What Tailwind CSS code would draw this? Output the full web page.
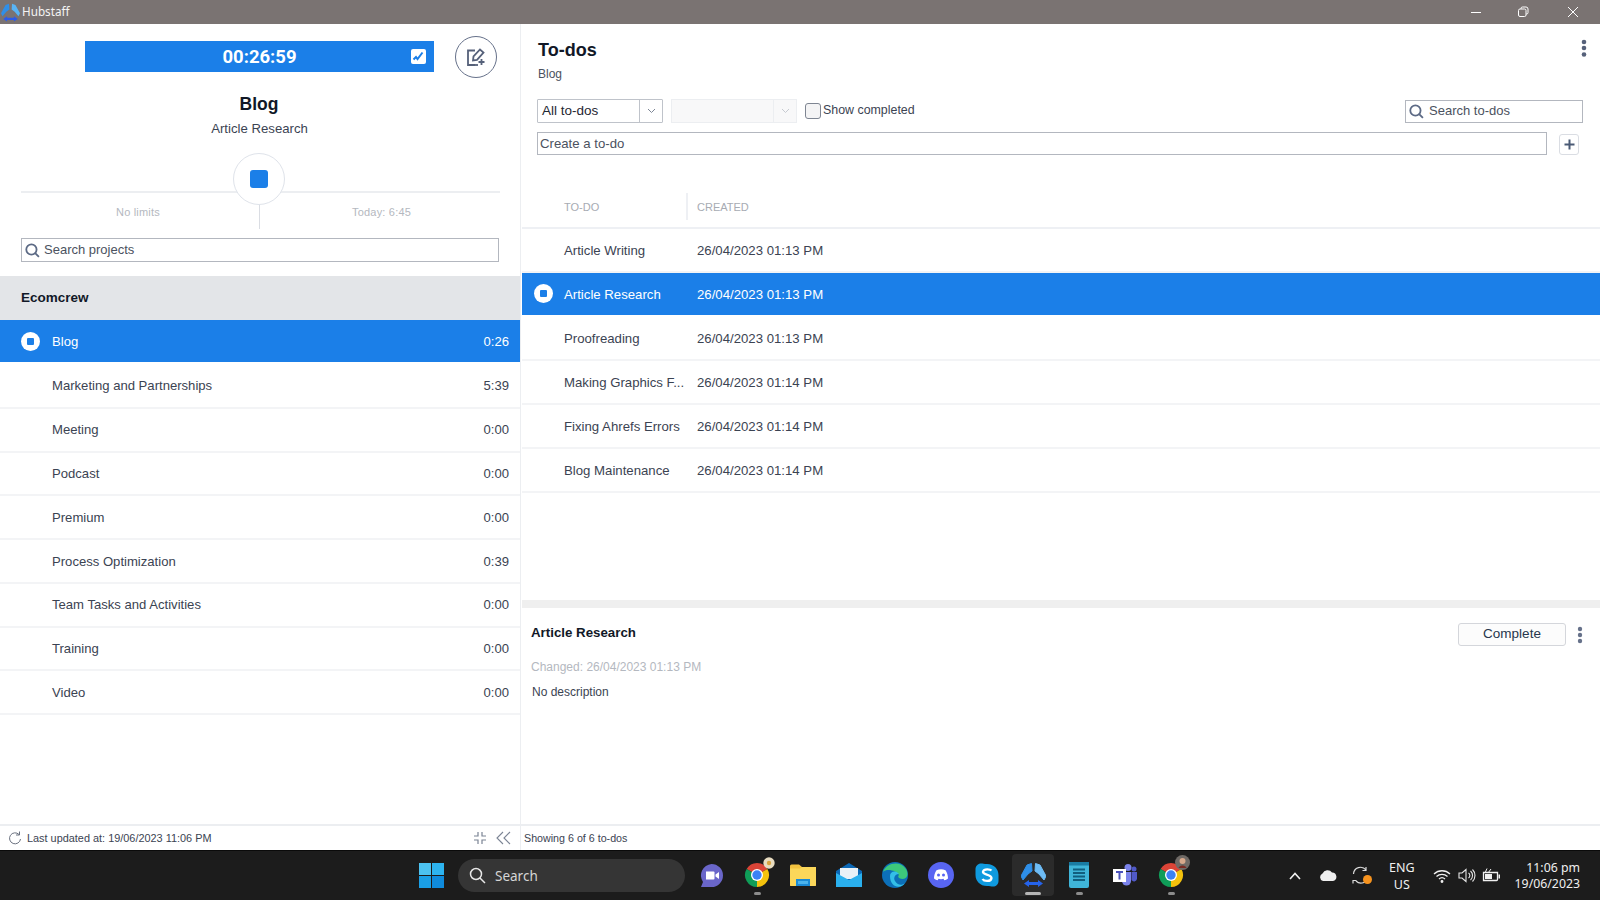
<!doctype html>
<html>
<head>
<meta charset="utf-8">
<title>Hubstaff</title>
<script src="https://cdn.jsdelivr.net/npm/@tailwindcss/browser@4"></script>
</head>
<body class="w-[1600px] h-[900px] overflow-hidden bg-white font-['Liberation_Sans',sans-serif] text-[13.2px] text-[#3b4352]">
<div class="flex flex-col h-[900px]">

  <!-- title bar -->
  <div class="h-6 bg-[#7a7372] flex items-center text-white shrink-0">
    <svg class="ml-[1px] w-[19px] h-[19px]" viewBox="0 0 25 24"><path d="M10.500 0.500L6 2L0 13L2 17L7 11L11 8Z" fill="#2f8fe8"/><path d="M14.500 0.500L19 2L25 13L23 17L18 11L14 8Z" fill="#58b4f5"/><path d="M3 20.500L8 17V19H17V17L22 20.500L17 24V22H8V24Z" fill="#2c5be8"/></svg>
    <span class="ml-[2px] font-['Noto_Sans',sans-serif] text-[11.700px] text-[#f4f4f4]">Hubstaff</span>
    <div class="ml-auto flex items-center">
      <svg class="w-[12px] h-[12px] mr-[35px]" viewBox="0 0 12 12"><path d="M1 6.500H11" stroke="#fff" stroke-width="1"/></svg>
      <svg class="w-[12px] h-[12px] mr-[38px]" viewBox="0 0 12 12" fill="none" stroke="#fff"><rect x="1.500" y="3" width="7.500" height="7.500" rx="1.500"/><path d="M4 3V2.500A1.500 1.500 0 0 1 5.500 1H9A2 2 0 0 1 11 3V6.500A1.500 1.500 0 0 1 9.500 8H9"/></svg>
      <svg class="w-[12px] h-[12px] mr-[21px]" viewBox="0 0 12 12"><path d="M1 1L11 11M11 1L1 11" stroke="#fff" stroke-width="1"/></svg>
    </div>
  </div>

  <!-- app -->
  <div class="flex-1 flex min-h-0">
    <!-- left panel -->
    <div class="w-[521px] shrink-0 border-r border-[#eceef1] flex flex-col text-[13.100px]">
      <div class="flex items-center h-[66px] pl-[85px]">
        <div class="w-[349px] h-[31px] -mt-[1px] pt-[3px] bg-[#1b7fe8] relative flex items-center justify-center text-white font-['Roboto',sans-serif] font-bold text-[18.5px]">
          00:26:59
          <svg class="absolute right-[8px] top-[8px] w-[15px] h-[15px]" viewBox="0 0 15 15"><rect width="15" height="15" rx="2" fill="#fff"/><path d="M2.500 10.500L5 8L6.500 10L11.500 3.500" fill="none" stroke="#1b7fe8" stroke-width="2"/></svg>
        </div>
        <div class="ml-[21px] w-[42px] h-[42px] rounded-full border border-[#66718a] flex items-center justify-center">
          <svg class="w-[20px] h-[20px]" viewBox="0 0 20 20" fill="none" stroke="#56617a" stroke-width="1.800"><path d="M9 3.500H2V18H9"/><path d="M2 18H12"/><path d="M7 13.500L7.500 9.500L14 2.500L17.500 5.500L11 12.800Z"/><path d="M15.500 12V18M12.500 15H18.500"/></svg>
        </div>
      </div>
      <div class="text-center text-[17.5px] font-bold text-[#111827] leading-[20px] mt-[4px] pr-[2px]">Blog</div>
      <div class="text-center text-[13.2px] leading-[16px] mt-[7px] text-[#3b4352] pr-[1px]">Article Research</div>

      <!-- slider -->
      <div class="relative h-[86px] mt-[15px] mx-[21px] w-[479px]">
        <div class="absolute left-0 right-0 top-[39px] h-[2px] bg-[#eceef1]"></div>
        <div class="absolute left-[212px] top-[1px] w-[52px] h-[52px] rounded-full bg-white border-[1.500px] border-[#dfe3ea] flex items-center justify-center">
          <div class="w-[18px] h-[18px] rounded-[3px] bg-[#1b7fe8]"></div>
        </div>
        <div class="absolute left-[238px] top-[53px] w-[1px] h-[24px] bg-[#dadde3]"></div>
        <div class="absolute left-[95px] top-[53px] text-[11px] leading-[15px] tracking-[0.2px] text-[#b4b8c0]">No limits</div>
        <div class="absolute left-[331px] top-[53px] text-[11px] leading-[15px] tracking-[0.2px] text-[#b4b8c0]">Today: 6:45</div>
      </div>

      <div class="mx-[21px] w-[478px] h-[24px] border border-[#b3b7bf] flex items-center pl-[3px] shrink-0">
        <svg class="w-[15px] h-[15px]" viewBox="0 0 14 14" fill="none" stroke="#5c6a85" stroke-width="1.700"><circle cx="6" cy="6" r="4.800"/><path d="M9.500 9.500L13 13"/></svg>
        <span class="ml-[4px] text-[13px] text-[#4b5260]">Search projects</span>
      </div>

      <div class="mt-[14px] h-[44px] bg-[#e3e5e8] flex items-center pl-[21px] font-bold text-[13.5px] text-[#111827] shrink-0">Ecomcrew</div>

      <div class="h-[42px] pt-[1px] bg-[#1b7fe8] text-white flex items-center pl-[21px] pr-[11px] shrink-0 mb-[2px]">
        <div class="-mt-[1px] w-[19px] h-[19px] rounded-full bg-white flex items-center justify-center"><div class="w-[7px] h-[7px] rounded-[1px] bg-[#1b7fe8]"></div></div>
        <span class="ml-[12px]">Blog</span><span class="ml-auto">0:26</span>
      </div>
      <div class="h-[44.750px] pt-[1px] border-b-2 border-[#f3f4f6] flex items-center pl-[52px] pr-[11px] shrink-0"><span>Marketing and Partnerships</span><span class="ml-auto">5:39</span></div>
      <div class="h-[43.750px] pt-[1px] border-b-2 border-[#f3f4f6] flex items-center pl-[52px] pr-[11px] shrink-0"><span>Meeting</span><span class="ml-auto">0:00</span></div>
      <div class="h-[43.750px] pt-[1px] border-b-2 border-[#f3f4f6] flex items-center pl-[52px] pr-[11px] shrink-0"><span>Podcast</span><span class="ml-auto">0:00</span></div>
      <div class="h-[43.750px] pt-[1px] border-b-2 border-[#f3f4f6] flex items-center pl-[52px] pr-[11px] shrink-0"><span>Premium</span><span class="ml-auto">0:00</span></div>
      <div class="h-[43.750px] pt-[1px] border-b-2 border-[#f3f4f6] flex items-center pl-[52px] pr-[11px] shrink-0"><span>Process Optimization</span><span class="ml-auto">0:39</span></div>
      <div class="h-[43.750px] pt-[1px] border-b-2 border-[#f3f4f6] flex items-center pl-[52px] pr-[11px] shrink-0"><span>Team Tasks and Activities</span><span class="ml-auto">0:00</span></div>
      <div class="h-[43.750px] pt-[1px] border-b-2 border-[#f3f4f6] flex items-center pl-[52px] pr-[11px] shrink-0"><span>Training</span><span class="ml-auto">0:00</span></div>
      <div class="h-[43.750px] pt-[1px] border-b-2 border-[#f3f4f6] flex items-center pl-[52px] pr-[11px] shrink-0"><span>Video</span><span class="ml-auto">0:00</span></div>

      <div class="mt-auto h-[26px] border-t-2 border-[#eceef1] flex items-center pl-[8px] pr-[9px] text-[10.900px] text-[#3b4352] shrink-0">
        <svg class="w-[14px] h-[14px]" viewBox="0 0 14 14" fill="none" stroke="#6b7280" stroke-width="1"><path d="M11 3.500A5.500 5.500 0 1 0 12.500 8"/><path d="M11.500 0.500V4H8"/></svg>
        <span class="ml-[5px] pt-[1px]">Last updated at: 19/06/2023 11:06 PM</span>
        <svg class="ml-auto w-[14px] h-[14px]" viewBox="0 0 14 14" fill="none" stroke="#7b8494" stroke-width="1.200"><path d="M5 1V5H1M9 1V5H13M5 13V9H1M9 13V9H13"/></svg>
        <svg class="ml-[9px] w-[15px] h-[14px]" viewBox="0 0 15 14" fill="none" stroke="#7b8494" stroke-width="1.100"><path d="M7 1L1 7L7 13M14 1L8 7L14 13"/></svg>
      </div>
    </div>

    <!-- right panel -->
    <div class="flex-1 flex flex-col min-w-0">
      <div class="relative h-[75px] pl-[17px] pt-[15px] shrink-0">
        <div class="text-[18px] font-bold leading-[22px] text-[#111827]">To-dos</div>
        <div class="text-[12px] leading-[14px] mt-[6px] text-[#4b5260]">Blog</div>
        <svg class="absolute right-[13px] top-[15px] w-[6px] h-[18px]" viewBox="0 0 6 18" fill="#56617a"><circle cx="3" cy="3" r="2.300"/><circle cx="3" cy="9" r="2.300"/><circle cx="3" cy="15.500" r="2.300"/></svg>
      </div>

      <div class="flex items-center h-[24px] pl-[16px] pr-[17px] shrink-0">
        <div class="w-[126px] h-[24px] border border-[#bfc3ca] rounded-[1px] flex items-center shrink-0">
          <span class="pl-[4px] flex-1 text-[13.500px] text-[#1f2733]">All to-dos</span>
          <span class="w-[23px] h-full border-l border-[#bfc3ca] flex items-center justify-center"><svg class="w-[9px] h-[6px]" viewBox="0 0 9 6" fill="none" stroke="#7d8696"><path d="M1 1L4.500 4.500L8 1"/></svg></span>
        </div>
        <div class="ml-[8px] w-[126px] h-[24px] border border-[#eceef1] bg-[#f8f8f9] flex items-center justify-end shrink-0">
          <span class="w-[23px] h-full border-l border-[#eceef1] flex items-center justify-center"><svg class="w-[9px] h-[6px]" viewBox="0 0 9 6" fill="none" stroke="#c6cad1"><path d="M1 1L4.500 4.500L8 1"/></svg></span>
        </div>
        <div class="ml-[8px] w-[16px] h-[16px] border border-[#7e8592] rounded-[3px] bg-[#f4f4f5] shrink-0"></div>
        <span class="ml-[2px] text-[12.400px] text-[#3b4352] -mt-[2px]">Show completed</span>
        <div class="ml-auto w-[178px] h-[23px] border border-[#b3b7bf] flex items-center pl-[3px] shrink-0">
          <svg class="w-[15px] h-[15px]" viewBox="0 0 14 14" fill="none" stroke="#5c6a85" stroke-width="1.700"><circle cx="6" cy="6" r="4.800"/><path d="M9.500 9.500L13 13"/></svg>
          <span class="ml-[5px] text-[13px] text-[#4b5260]">Search to-dos</span>
        </div>
      </div>

      <div class="flex items-center mt-[9px] pl-[16px] pr-[21px] shrink-0">
        <div class="flex-1 h-[23px] border border-[#b3b7bf] flex items-center pl-[2px] pt-[1px] text-[13.200px] text-[#4b5260]">Create a to-do</div>
        <div class="ml-[12px] mt-[1px] w-[20px] h-[21px] border border-[#dadde3] rounded-[3px] flex items-center justify-center">
          <svg class="w-[11px] h-[11px]" viewBox="0 0 11 11"><path d="M5.500 0.500V10.500M0.500 5.500H10.500" stroke="#4a5a75" stroke-width="2"/></svg>
        </div>
      </div>

      <div class="mt-[38px] ml-[1px] h-[36px] border-b-2 border-[#eef0f4] flex items-center text-[11px] text-[#a7abb3] shrink-0">
        <span class="pl-[42px] w-[166px] border-r-2 border-[#eef0f4] h-[27px] flex items-center -mt-[7px] pt-[2px]">TO-DO</span>
        <span class="pl-[9px] -mt-[5px]">CREATED</span>
      </div>

      <div class="ml-[1px] h-[43.750px] pt-[2px] border-b-2 border-[#f3f4f6] flex items-center shrink-0"><span class="pl-[42px] w-[174px]">Article Writing</span><span class="pl-[1px]">26/04/2023 01:13 PM</span></div>
      <div class="ml-[1px] h-[42.500px] pt-[2px] mb-[1.250px] bg-[#1b7fe8] text-white flex items-center shrink-0 relative">
        <div class="absolute left-[12px] top-[11.500px] w-[19px] h-[19px] rounded-full bg-white flex items-center justify-center"><div class="w-[7px] h-[7px] rounded-[1px] bg-[#1b7fe8]"></div></div>
        <span class="pl-[42px] w-[174px]">Article Research</span><span class="pl-[1px]">26/04/2023 01:13 PM</span></div>
      <div class="ml-[1px] h-[44px] pt-[2px] border-b-2 border-[#f3f4f6] flex items-center shrink-0"><span class="pl-[42px] w-[174px]">Proofreading</span><span class="pl-[1px]">26/04/2023 01:13 PM</span></div>
      <div class="ml-[1px] h-[44px] pt-[2px] border-b-2 border-[#f3f4f6] flex items-center shrink-0"><span class="pl-[42px] w-[174px]">Making Graphics F...</span><span class="pl-[1px]">26/04/2023 01:14 PM</span></div>
      <div class="ml-[1px] h-[44px] pt-[2px] border-b-2 border-[#f3f4f6] flex items-center shrink-0"><span class="pl-[42px] w-[174px]">Fixing Ahrefs Errors</span><span class="pl-[1px]">26/04/2023 01:14 PM</span></div>
      <div class="ml-[1px] h-[44px] pt-[2px] border-b-2 border-[#f3f4f6] flex items-center shrink-0"><span class="pl-[42px] w-[174px]">Blog Maintenance</span><span class="pl-[1px]">26/04/2023 01:14 PM</span></div>

      <div class="mt-auto ml-[1px] h-[8px] bg-[#efefef] shrink-0"></div>
      <div class="h-[216px] shrink-0 relative pl-[10px] pt-[17px]">
        <div class="font-bold text-[13.300px] leading-[16px] text-[#111827]">Article Research</div>
        <div class="text-[12px] leading-[14px] mt-[19px] text-[#b4b8c0]">Changed: 26/04/2023 01:13 PM</div>
        <div class="text-[12px] leading-[14px] mt-[11px] text-[#3b4352] pl-[1px]">No description</div>
        <div class="absolute left-[937px] top-[15px] w-[108px] h-[23px] border border-[#d4d6db] rounded-[3px] bg-[#fcfcfc] flex items-center justify-center text-[13.500px] text-[#27364d]">Complete</div>
        <svg class="absolute left-[1056px] top-[18px] w-[6px] h-[18px]" viewBox="0 0 6 18" fill="#66718a"><circle cx="3" cy="3" r="2.200"/><circle cx="3" cy="9" r="2.200"/><circle cx="3" cy="15" r="2.200"/></svg>
      </div>
      <div class="h-[26px] border-t-2 border-[#eceef1] flex items-center pl-[3px] text-[10.700px] text-[#3b4352] shrink-0">Showing 6 of 6 to-dos</div>
    </div>
  </div>

  <!-- taskbar -->
  <div class="h-[50px] bg-[#1c1c1c] border-t border-[#0a0a0a] flex items-center shrink-0 relative font-['Noto_Sans',sans-serif] text-white">
    <svg class="ml-[419px] w-[25px] h-[25px] shrink-0" viewBox="0 0 25 25"><rect width="12" height="12" fill="#4cc2f1"/><rect x="13" width="12" height="12" fill="#2db4f0"/><rect y="13" width="12" height="12" fill="#1a9fe6"/><rect x="13" y="13" width="12" height="12" fill="#0f8bdc"/></svg>
    <div class="ml-[14px] w-[227px] h-[33px] rounded-full bg-[#353535] flex items-center pl-[11px] shrink-0">
      <svg class="w-[17px] h-[17px]" viewBox="0 0 17 17" fill="none" stroke="#e8e8e8" stroke-width="1.500"><circle cx="7" cy="7" r="5.500"/><path d="M11 11L16 16"/></svg>
      <span class="ml-[9px] pt-[1px] text-[13.500px] text-[#d6d6d6]">Search</span>
    </div>

    <div class="ml-[3px] flex items-center -mt-[1px]">
      <!-- meeting -->
      <div class="w-[46px] h-[42px] flex items-center justify-center"><svg class="w-[25px] h-[25px]" viewBox="0 0 25 25"><path d="M12.500 1A11.500 11.500 0 1 1 12.500 24H2L4 19A11.500 11.500 0 0 1 12.500 1Z" fill="#6a66c9"/><path d="M7 8.500H14.500A1 1 0 0 1 15.500 9.500V15.500A1 1 0 0 1 14.500 16.500H7Z" fill="#fff"/><path d="M16.500 11.500L20 9V16L16.500 13.500Z" fill="#fff"/></svg></div>
      <!-- chrome -->
      <div class="w-[46px] h-[42px] flex items-center justify-center relative"><svg class="w-[26px] h-[26px]" viewBox="0 0 26 26"><path d="M13 13L2.600 7A12 12 0 0 1 23.400 7Z" fill="#db4437"/><path d="M13 13L23.400 7A12 12 0 0 1 13 25Z" fill="#f4c20d"/><path d="M13 13L13 25A12 12 0 0 1 2.600 7Z" fill="#0f9d58"/><circle cx="13" cy="13" r="6" fill="#fff"/><circle cx="13" cy="13" r="4.700" fill="#3b82f6"/></svg><svg class="absolute right-[5px] top-[3px] w-[12px] h-[12px]" viewBox="0 0 11 11"><circle cx="5.500" cy="5.500" r="5.200" fill="#e8dcc0"/><circle cx="5.500" cy="5.500" r="2" fill="#d9a441"/></svg><div class="absolute bottom-[1px] left-[20px] w-[7px] h-[3px] rounded-full bg-[#8c8c8c]"></div></div>
      <!-- folder -->
      <div class="w-[46px] h-[42px] flex items-center justify-center"><svg class="w-[26px] h-[24px]" viewBox="0 0 26 24"><path d="M0 3A1.500 1.500 0 0 1 1.500 1.500H9L12 4H24.500A1.500 1.500 0 0 1 26 5.500V22A1 1 0 0 1 25 23H1A1 1 0 0 1 0 22Z" fill="#f3c33f"/><path d="M0 5.500H10L12 4H26V22A1 1 0 0 1 25 23H1A1 1 0 0 1 0 22Z" fill="#fbd75a"/><rect x="6" y="16" width="14" height="7" fill="#1a8ad4"/><rect x="8" y="18" width="10" height="3" fill="#4bb3ec"/></svg></div>
      <!-- mail -->
      <div class="w-[46px] h-[42px] flex items-center justify-center"><svg class="w-[26px] h-[25px]" viewBox="0 0 26 25"><path d="M0 8L13 0L26 8V24H0Z" fill="#0b67b5"/><path d="M4 5H22V16H4Z" fill="#e9f1f7"/><path d="M0 10L13 17L26 10V24H0Z" fill="#2ab0ee"/></svg></div>
      <!-- edge -->
      <div class="w-[46px] h-[42px] flex items-center justify-center"><svg class="w-[26px] h-[26px]" viewBox="0 0 26 26"><circle cx="13" cy="13" r="13" fill="#0c6fb8"/><path d="M1 10C4 1 18 -2 24 7C27 12 25 17 21 17C17 17 15 15 17 13C15 9 5 6 1 10Z" fill="#3dc87b"/><path d="M8 14C8 9 14 8 17 12C13 12 11 16 13 19C15 23 20 24 23 21C18 28 8 25 8 14Z" fill="#33bfe8"/></svg></div>
      <!-- discord -->
      <div class="w-[46px] h-[42px] flex items-center justify-center"><svg class="w-[26px] h-[26px]" viewBox="0 0 26 26"><circle cx="13" cy="13" r="13" fill="#5865f2"/><path d="M8.500 8.200C11.500 7 14.500 7 17.500 8.200C19 10.500 20 13.300 20 16.500C18.800 17.500 17.500 18 16.300 18.300L15.500 16.800C14 17.300 12 17.300 10.500 16.800L9.700 18.300C8.500 18 7.200 17.500 6 16.500C6 13.300 7 10.500 8.500 8.200Z" fill="#fff"/><circle cx="10.500" cy="13" r="1.500" fill="#5865f2"/><circle cx="15.500" cy="13" r="1.500" fill="#5865f2"/></svg></div>
      <!-- skype -->
      <div class="w-[46px] h-[42px] flex items-center justify-center"><svg class="w-[24px] h-[24px]" viewBox="0 0 24 24"><path d="M6 0.500C8 0.500 9 1 12 1C19 1 23.500 6 23.500 12C23.500 14 23.500 15 23.500 18C23.500 21.500 21 23.500 18 23.500C16 23.500 15 23 12 23C5 23 0.500 18 0.500 12C0.500 10 0.500 9 0.500 6C0.500 3 3 0.500 6 0.500Z" fill="#0f9adf"/><path d="M16.500 7.500C15 6 9 5.500 8 8.500C7 12 16.500 11 16.500 15C16 19 9 18.500 7.500 16" fill="none" stroke="#fff" stroke-width="2.300"/></svg></div>
      <!-- hubstaff -->
      <div class="w-[46px] h-[42px] flex items-center justify-center relative"><div class="absolute left-[2px] top-0 w-[42px] h-[42px] rounded-[4px] bg-[#2b2b2b]"></div><svg class="relative w-[25px] h-[24px]" viewBox="0 0 25 24"><path d="M10.500 0.500L6 2L0 13L2 17L7 11L11 8Z" fill="#2e8fe9" stroke="#2e8fe9" stroke-linejoin="round"/><path d="M14.500 0.500L19 2L25 13L23 17L18 11L14 8Z" fill="#6dbcf6" stroke="#6dbcf6" stroke-linejoin="round"/><path d="M3 20.500L8 17V19H17V17L22 20.500L17 24V22H8V24Z" fill="#2563eb"/></svg><div class="absolute bottom-[1px] left-[15px] w-[16px] h-[3px] rounded-full bg-[#b5b5b5]"></div></div>
      <!-- notepad -->
      <div class="w-[46px] h-[42px] flex items-center justify-center relative"><svg class="w-[20px] h-[26px]" viewBox="0 0 20 26"><rect y="1" width="20" height="25" rx="2" fill="#3fb5d9"/><rect x="0" y="0" width="20" height="3.500" fill="#1a7ca3"/><path d="M4 7.500H16M4 11H16M4 14.500H16M4 18H16" stroke="#115e7e" stroke-width="2"/></svg><div class="absolute bottom-[1px] left-[20px] w-[7px] h-[3px] rounded-full bg-[#8c8c8c]"></div></div>
      <!-- teams -->
      <div class="w-[46px] h-[42px] flex items-center justify-center"><svg class="w-[24px] h-[22px]" viewBox="0 0 24 22"><circle cx="15" cy="3.500" r="3.500" fill="#7b83eb"/><circle cx="21" cy="5" r="2.500" fill="#5059c9"/><path d="M9 8H18V17A4.500 4.500 0 0 1 9 17Z" fill="#7b83eb"/><path d="M18.500 8H24V15A3 3 0 0 1 18.500 16Z" fill="#5059c9"/><rect x="0" y="5" width="13" height="13" fill="#fff"/><path d="M3 8H10M6.500 8V15.500" stroke="#4b53bc" stroke-width="2"/></svg></div>
      <!-- chrome 2 -->
      <div class="w-[46px] h-[42px] flex items-center justify-center relative"><svg class="w-[26px] h-[26px]" viewBox="0 0 26 26"><path d="M13 13L2.600 7A12 12 0 0 1 23.400 7Z" fill="#db4437"/><path d="M13 13L23.400 7A12 12 0 0 1 13 25Z" fill="#f4c20d"/><path d="M13 13L13 25A12 12 0 0 1 2.600 7Z" fill="#0f9d58"/><circle cx="13" cy="13" r="6" fill="#fff"/><circle cx="13" cy="13" r="4.700" fill="#3b82f6"/></svg><svg class="absolute right-[4px] top-[1px] w-[15px] h-[15px]" viewBox="0 0 15 15"><circle cx="7.500" cy="7.500" r="7.500" fill="#6f6a66"/><circle cx="7.500" cy="6" r="3" fill="#d8a98c"/><path d="M3.500 13C4.500 9.500 10.500 9.500 11.500 13Z" fill="#7a2a22"/></svg><div class="absolute bottom-[1px] left-[20px] w-[7px] h-[3px] rounded-full bg-[#8c8c8c]"></div></div>
    </div>

    <!-- tray -->
    <div class="ml-auto flex items-center pr-[20px]">
      <svg class="w-[12px] h-[8px]" viewBox="0 0 12 8" fill="none" stroke="#f2f2f2" stroke-width="1.600"><path d="M1 7L6 1.500L11 7"/></svg>
      <svg class="ml-[18px] w-[18px] h-[11px]" viewBox="0 0 18 11"><path d="M4 11A4 4 0 0 1 3.500 3.500A5.500 5.500 0 0 1 13 2.500A4.300 4.300 0 0 1 14 11Z" fill="#efefef"/></svg>
      <div class="ml-[15px] relative w-[20px] h-[20px]"><svg class="w-[18px] h-[19px]" viewBox="0 0 18 19" fill="none" stroke="#dcdcdc" stroke-width="1.200"><path d="M1.500 8A7 7 0 0 1 14 4M14 1V4.500H10.500"/><path d="M16 11A7 7 0 0 1 4 15M1 17.500V14.500H4.500"/></svg><div class="absolute right-[0px] bottom-[2px] w-[9px] h-[9px] rounded-full bg-[#f7931e]"></div></div>
      <div class="ml-[17px] text-center text-[12.500px] leading-[17px] text-[#f0f0f0]">ENG<br>US</div>
      <svg class="ml-[18px] w-[18px] h-[14px]" viewBox="0 0 18 14" fill="none" stroke="#f0f0f0" stroke-width="1.300"><path d="M1 5A11.500 11.500 0 0 1 17 5M3.500 7.500A8 8 0 0 1 14.500 7.500M6 10A4.500 4.500 0 0 1 12 10"/><circle cx="9" cy="12.500" r="0.800" fill="#f0f0f0"/></svg>
      <svg class="ml-[7px] w-[18px] h-[15px]" viewBox="0 0 18 15" fill="none" stroke="#e6e6e6" stroke-width="1.100"><path d="M1 5H4L8 1.500V13.500L4 10H1Z"/><path d="M10.500 5A3 3 0 0 1 10.500 10M12.500 3A6 6 0 0 1 12.500 12M14.500 1.500A8.500 8.500 0 0 1 14.500 13.500"/></svg>
      <svg class="ml-[6px] w-[18px] h-[15px]" viewBox="0 0 18 15"><path d="M1.500 4.500H15.500V11.500A1 1 0 0 1 14.500 12.500H1.500Z" fill="none" stroke="#f0f0f0" stroke-width="1.300"/><path d="M3 6H10V11H3Z" fill="#f0f0f0"/><path d="M16.500 6.500H18V10.500H16.500Z" fill="#f0f0f0"/><path d="M5 0.500L3 5M9 1L6 5" stroke="#f0f0f0"/></svg>
      <div class="ml-[15px] text-right text-[12.300px] leading-[16px] text-[#f0f0f0]">11:06 pm<br>19/06/2023</div>
    </div>
  </div>
</div>
</body>
</html>
